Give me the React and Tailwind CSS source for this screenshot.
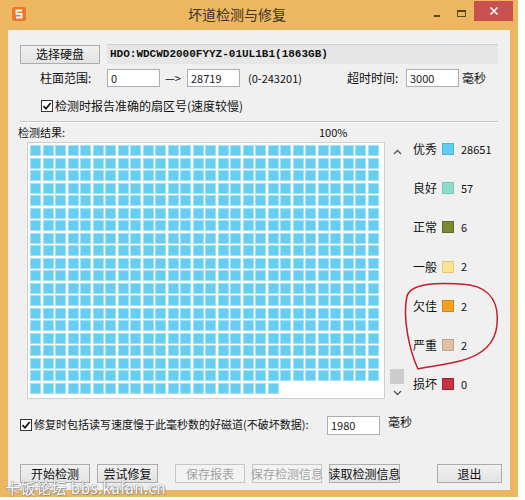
import React from 'react'

const cjk = { fontFamily: '"Noto Sans CJK SC", "Liberation Sans", sans-serif' }

const legend = [
    { label: '优秀', color: 'bg-[#63cdf1] border-[#4fb3da]', n: '28651' },
    { label: '良好', color: 'bg-[#8fdccf] border-[#79c6b8]', n: '57' },
    { label: '正常', color: 'bg-[#7b8a30] border-[#5e6b20]', n: '6' },
    { label: '一般', color: 'bg-[#f9e38e] border-[#e2c970]', n: '2' },
    { label: '欠佳', color: 'bg-[#f2a21f] border-[#d0841a]', n: '2' },
    { label: '严重', color: 'bg-[#dcc0a4] border-[#c2a688]', n: '2' },
    { label: '损坏', color: 'bg-[#c93242] border-[#a22030]', n: '0' },
]

function Btn({ children, className = '', disabled }) {
    return (
        <div className={`h-[19px] flex items-center justify-center border text-[12px] leading-none whitespace-nowrap ${disabled ? 'bg-[#f3f3f3] border-[#c6c6c6] text-[#a3a3a3]' : 'bg-gradient-to-b from-[#f0f0f0] to-[#e3e3e3] border-[#acacac] text-[#111]'} ${className}`}>
            {children}
        </div>
    )
}

function Field({ value, className = '' }) {
    return (
        <div className={`h-[18px] bg-white border border-[#abadb3] text-[11px] leading-none pl-[3px] pt-[3px] text-[#222] ${className}`}>
            {value}
        </div>
    )
}

function Check() {
    return (
        <div className="w-[12px] h-[12px] bg-white border border-[#333] flex items-center justify-center shrink-0">
            <svg width="10" height="10" viewBox="0 0 10 10">
                <path d="M1.5 5.2 L4 7.8 L8.6 2" stroke="#111" strokeWidth="1.7" fill="none" />
            </svg>
        </div>
    )
}

export default function App() {
    const cells = Array.from({ length: 19 * 28 + 20 })

    return (
        <div className="w-[525px] h-[500px] bg-white relative overflow-hidden" style={cjk}>
            <div className="w-[518px] h-[497px] bg-[#edb661] flex flex-col px-[8px] pb-[7px]">
                {/* title bar */}
                <div className="h-[30px] flex items-center relative shrink-0">
                    <svg width="14" height="14" viewBox="0 0 14 14" className="ml-[4px] mt-[-2px]">
                        <rect x="0" y="0" width="14" height="14" rx="2" fill="#e97a2b" />
                        <path d="M10 3.5 H4.5 V6.8 H9.5 V10.5 H4" stroke="#fff" strokeWidth="1.8" fill="none" />
                    </svg>
                    <div className="flex-1 text-center text-[14px] text-[#3b3326] mt-[-2px] pl-[14px]">坏道检测与修复</div>
                    <div className="w-[6px] h-[2px] bg-[#55462e] mr-[17px] mt-[2px]" />
                    <div className="w-[9px] h-[7px] border border-[#55462e] border-t-2 mr-[8px] mt-[-4px]" />
                    <div className="w-[39px] h-[20px] bg-[#c8504e] flex items-center justify-center self-start mt-[1px] mr-[-3px]">
                        <svg width="10" height="10" viewBox="0 0 10 10">
                            <path d="M1.5 1.5 L8.5 8.5 M8.5 1.5 L1.5 8.5" stroke="#fff" strokeWidth="1.6" />
                        </svg>
                    </div>
                </div>

                {/* client */}
                <div className="flex-1 bg-[#f0f0f0] relative flex flex-col">
                    <div className="flex items-center mt-[14px] ml-[12px]">
                        <Btn className="w-[80px]">选择硬盘</Btn>
                        <div className="ml-[7px] w-[391px] h-[20px] bg-[#e6e6e6] border-t border-[#d0d0d0] flex items-center pl-[3px] text-[11px] font-bold text-[#111]" style={{ fontFamily: '"Liberation Mono", monospace' }}>
                            HDO:WDCWD2000FYYZ-01UL1B1(1863GB)
                        </div>
                    </div>

                    <div className="flex items-center mt-[5px] text-[12px] text-[#111]">
                        <div className="ml-[32px] w-[67px]">柱面范围:</div>
                        <Field value="0" className="w-[53px]" />
                        <div className="w-[27px] pl-[5px] text-[11px]">—&gt;</div>
                        <Field value="28719" className="w-[53px]" />
                        <div className="ml-[8px] w-[99px] text-[11px]">(0-243201)</div>
                        <div className="w-[59px]">超时时间:</div>
                        <Field value="3000" className="w-[53px]" />
                        <div className="ml-[3px]">毫秒</div>
                    </div>

                    <div className="flex items-center mt-[10px] ml-[33px] gap-[2px] text-[12px] text-[#111]">
                        <Check />
                        <span>检测时报告准确的扇区号(速度较慢)</span>
                    </div>

                    <div className="ml-[12px] w-[478px] h-[1px] bg-[#c8c8c8] mt-[6px] border-b border-white box-content" />

                    <div className="flex items-end h-[14px] mt-[3px] text-[11px] text-[#111]">
                        <div className="ml-[10px] w-[301px]">检测结果:</div>
                        <div>100%</div>
                    </div>

                    <div className="flex items-start h-[257px] mt-[2px]">
                        <div className="ml-[19px] w-[358px] h-[257px] bg-white border border-[#cfcfcf] pt-[2px] pl-[2px]">
                            <div className="grid grid-cols-[repeat(28,11px)] gap-[1.5px]">
                                {cells.map((_, i) => (
                                    <div key={i} className="w-[11px] h-[11px] bg-[#65cef2] border border-[#a4e0f4]" />
                                ))}
                            </div>
                        </div>

                        <div className="ml-[5px] w-[14px] h-[257px] flex flex-col items-center">
                            <svg width="9" height="6" viewBox="0 0 9 6" className="mt-[7px]">
                                <path d="M1 5 L4.5 1.5 L8 5" stroke="#555" strokeWidth="1.3" fill="none" />
                            </svg>
                            <div className="flex-1" />
                            <div className="w-[14px] h-[15px] bg-[#cdcdcd]" />
                            <svg width="9" height="6" viewBox="0 0 9 6" className="mt-[6px] mb-[3px]">
                                <path d="M1 1 L4.5 4.5 L8 1" stroke="#555" strokeWidth="1.3" fill="none" />
                            </svg>
                        </div>

                        <div className="ml-[9px] flex flex-col gap-[25.2px] mt-[0px]">
                            {legend.map((l) => (
                                <div key={l.label} className="flex items-center h-[14px] text-[12px] text-[#111]">
                                    <div className="w-[29px]">{l.label}</div>
                                    <div className={`w-[12px] h-[12px] border ${l.color}`} />
                                    <div className="ml-[7px] text-[11px]">{l.n}</div>
                                </div>
                            ))}
                        </div>
                    </div>

                    <div className="flex items-center mt-[15px] ml-[12px] text-[12px] text-[#111]">
                        <Check />
                        <span className="ml-[2px] w-[293px] whitespace-nowrap text-[11px]">修复时包括读写速度慢于此毫秒数的好磁道(不破坏数据):</span>
                        <Field value="1980" className="w-[53px] h-[19px] mt-[2px]" />
                        <span className="ml-[8px] mt-[-6px]">毫秒</span>
                    </div>

                    <div className="flex items-center mt-[29px] ml-[12px]">
                        <Btn className="w-[70px] border-[#3c7fb1]">开始检测</Btn>
                        <Btn className="w-[61px] ml-[7px]">尝试修复</Btn>
                        <Btn className="w-[70px] ml-[17px]" disabled>保存报表</Btn>
                        <Btn className="w-[70px] ml-[7px]" disabled>保存检测信息</Btn>
                        <Btn className="w-[71px] ml-[7px] border-[#707070]">读取检测信息</Btn>
                        <Btn className="w-[65px] ml-[37px]">退出</Btn>
                    </div>
                </div>
            </div>

            {/* hand-drawn annotation */}
            <svg className="absolute left-0 top-0 pointer-events-none" width="525" height="500" viewBox="0 0 525 500">
                <path d="M418 369 C410 352 402 318 407 296 C411 283 440 282 470 285 C492 289 499 305 497 325 C495 345 480 356 460 361 C445 365 430 366 418 369"
                    stroke="#c31e2a" strokeWidth="1.5" fill="none" />
            </svg>

            <div className="absolute left-[5px] top-[480px] text-[15px] leading-none text-white tracking-[0.5px]"
                style={{ textShadow: '0 0 1px #777, 0 0 1px #777, 1px 1px 1px #999' }}>
                卡饭论坛 bbs.kafan.cn
            </div>

            <div className="absolute right-0 top-0 w-[7px] h-[500px] bg-white" />
        </div>
    )
}
